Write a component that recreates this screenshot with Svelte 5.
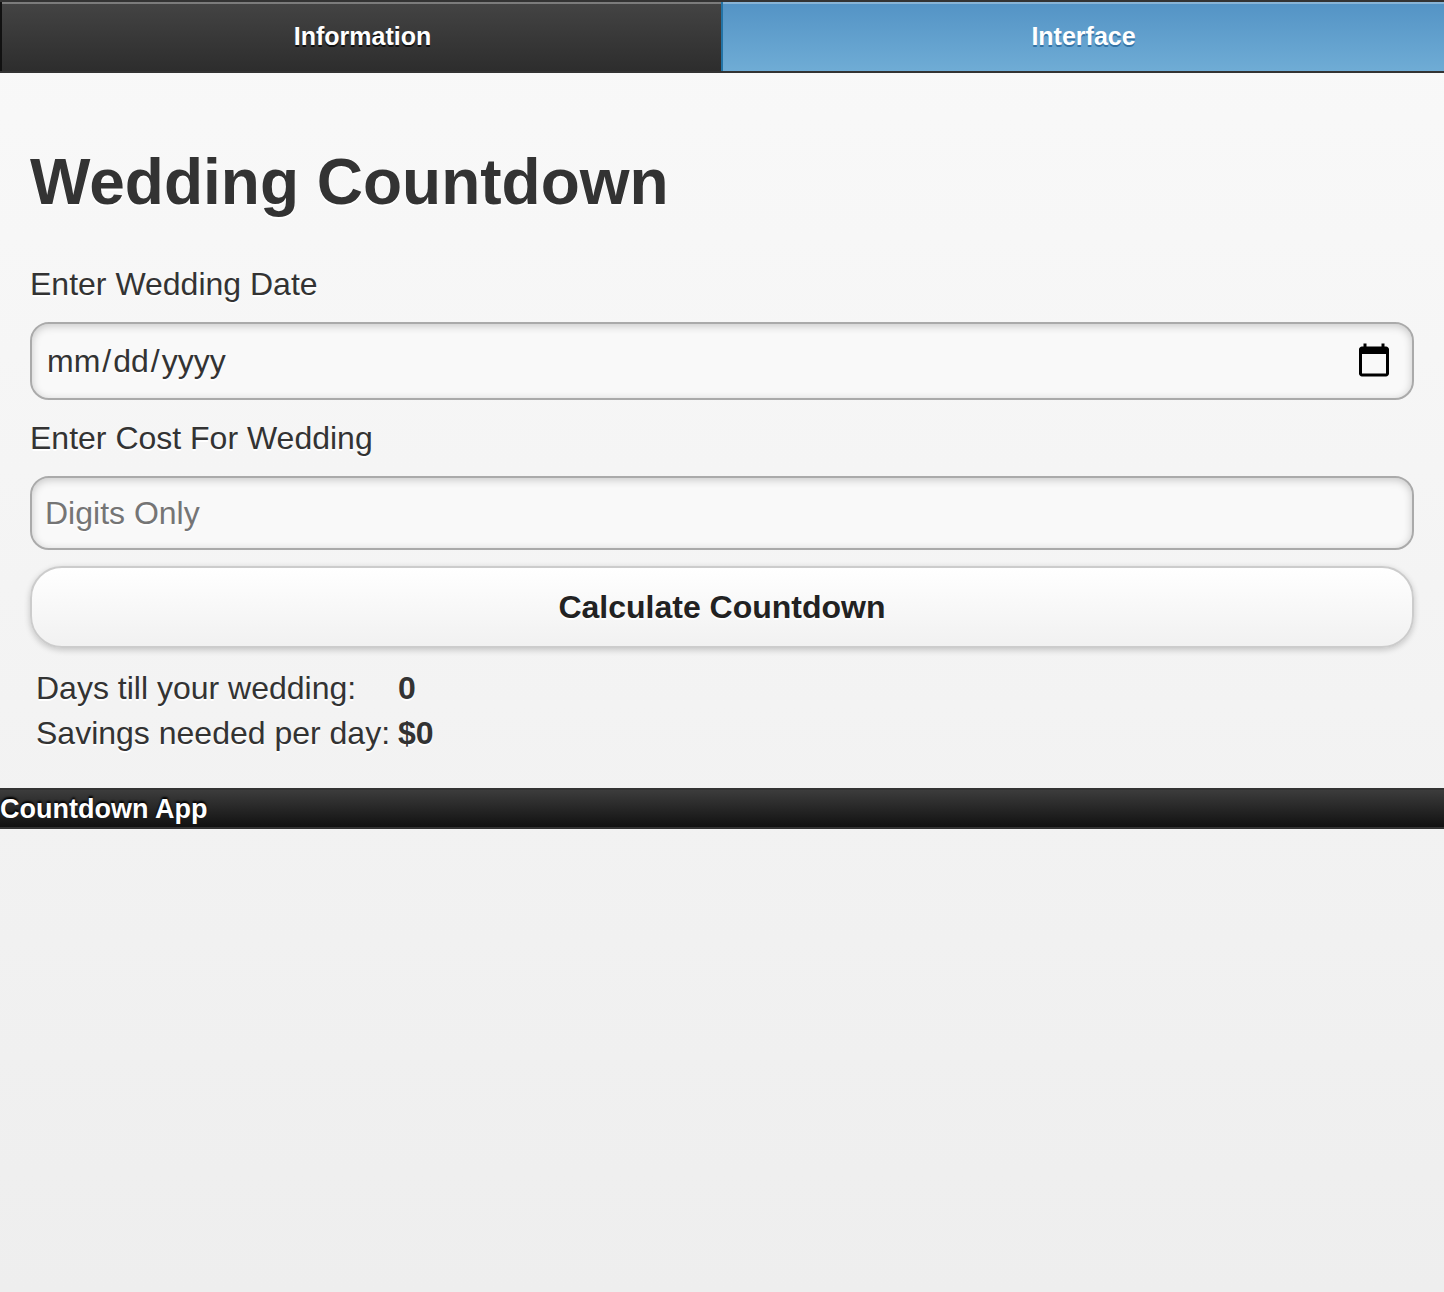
<script>
  let weddingDate = $state('');
  let cost = $state('');
  let days = $state(0);
  let perDay = $state('0');

  function calculate(event) {
    event.preventDefault();
    const remaining = Math.ceil((new Date(weddingDate) - Date.now()) / 86400000);
    days = remaining > 0 ? remaining : 0;
    perDay = days ? (Number(cost) / days).toFixed(2) : '0';
  }
</script>

<div class="page">
  <nav>
    <a href="#information">Information</a>
    <a href="#interface" class="active" aria-current="page">Interface</a>
  </nav>

  <main>
    <h1>Wedding Countdown</h1>
    <form onsubmit={calculate}>
      <label for="date">Enter Wedding Date</label>
      <input id="date" class="date" type="date" bind:value={weddingDate} />
      <label for="cost">Enter Cost For Wedding</label>
      <input id="cost" type="text" inputmode="numeric" placeholder="Digits Only" bind:value={cost} />
      <button type="submit">Calculate Countdown</button>
    </form>
    <table>
      <tbody>
        <tr><td>Days till your wedding:</td><td><b>{days}</b></td></tr>
        <tr><td>Savings needed per day:</td><td><b>${perDay}</b></td></tr>
      </tbody>
    </table>
  </main>

  <footer>Countdown App</footer>
</div>

<style>
  :global(body) {
    margin: 0;
  }
  .page {
    min-height: 100vh;
    background: linear-gradient(#f9f9f9, #eee);
    color: #333;
    font: 32px/42px "Liberation Sans", Arial, sans-serif;
    text-shadow: 0 2px 0 #fff;
  }
  nav {
    display: flex;
    border: solid #333;
    border-width: 2px 0;
  }
  nav a {
    flex: 1;
    padding: 18px 0 19px;
    border-left: 2px solid #111;
    box-shadow: inset 0 2px 0 rgba(255, 255, 255, 0.3);
    background: linear-gradient(#444, #2d2d2d);
    color: #fff;
    font-size: 25px;
    line-height: 32px;
    font-weight: bold;
    text-align: center;
    text-decoration: none;
    text-shadow: 0 2px 0 #111;
  }
  nav .active {
    margin-left: -2px;
    border-left-color: #2373a5;
    background: linear-gradient(#5393c5, #6facd5);
    text-shadow: 0 2px 0 #3373a5;
  }
  main {
    padding: 71px 30px 30px;
  }
  h1 {
    margin: 0 0 43px;
    font-size: 64px;
    line-height: 76px;
  }
  label {
    display: block;
    margin-bottom: 17px;
  }
  input {
    box-sizing: border-box;
    display: block;
    width: 100%;
    height: 74px;
    margin: 0 0 16px;
    padding: 12px 13px;
    border: 2px solid #aaa;
    border-radius: 19px;
    background: #f9f9f9;
    box-shadow: inset 0 2px 8px rgba(0, 0, 0, 0.2);
    color: #333;
    font: inherit;
    text-shadow: inherit;
    outline: none;
  }
  .date {
    height: 78px;
    margin-bottom: 17px;
  }
  .date::-webkit-datetime-edit-month-field,
  .date::-webkit-datetime-edit-day-field,
  .date::-webkit-datetime-edit-year-field {
    padding: 0 2px;
  }
  .date::-webkit-calendar-picker-indicator {
    width: 38px;
    height: 38px;
    margin-right: 4px;
  }
  input::placeholder {
    color: #757575;
  }
  button {
    display: block;
    box-sizing: border-box;
    width: 100%;
    height: 82px;
    margin: 0 0 16px;
    padding: 0;
    border: 2px solid #ccc;
    border-radius: 32px;
    background: linear-gradient(#fff, #f1f1f1);
    box-shadow: 0 2px 6px rgba(0, 0, 0, 0.2);
    color: #222;
    font: bold 32px/42px "Liberation Sans", Arial, sans-serif;
    text-shadow: 0 2px 0 #fff;
  }
  table {
    border-spacing: 4px;
    border-collapse: separate;
  }
  td {
    padding: 2px;
    line-height: 37px;
  }
  footer {
    padding-top: 2px;
    border: solid #333;
    border-width: 2px 0;
    background: linear-gradient(#3c3c3c, #111);
    color: #fff;
    font-size: 27px;
    line-height: 35px;
    font-weight: bold;
    text-shadow: 0 -2px 2px #000;
  }
</style>
